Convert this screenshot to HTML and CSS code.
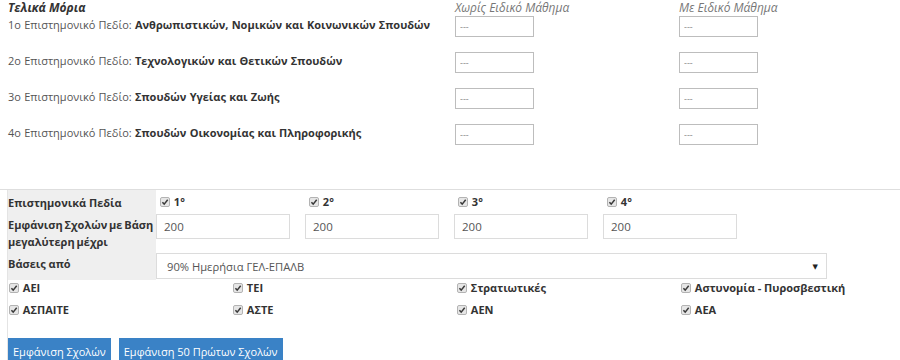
FILE: index.html
```html
<!DOCTYPE html>
<html lang="el">
<head>
<meta charset="utf-8">
<link rel="stylesheet" href="styles.css">
</head>
<body>
<div class="scores">
  <div class="sh-title">Τελικά Μόρια</div>
  <div class="sh-col">Χωρίς Ειδικό Μάθημα</div>
  <div class="sh-col">Με Ειδικό Μάθημα</div>

  <div class="field">1o Επιστημονικό Πεδίο: <b>Ανθρωπιστικών, Νομικών και Κοινωνικών Σπουδών</b></div>
  <div><input class="score" type="text" placeholder="---"></div>
  <div><input class="score" type="text" placeholder="---"></div>

  <div class="field">2o Επιστημονικό Πεδίο: <b>Τεχνολογικών και Θετικών Σπουδών</b></div>
  <div><input class="score" type="text" placeholder="---"></div>
  <div><input class="score" type="text" placeholder="---"></div>

  <div class="field">3o Επιστημονικό Πεδίο: <b>Σπουδών Υγείας και Ζωής</b></div>
  <div><input class="score" type="text" placeholder="---"></div>
  <div><input class="score" type="text" placeholder="---"></div>

  <div class="field">4o Επιστημονικό Πεδίο: <b>Σπουδών Οικονομίας και Πληροφορικής</b></div>
  <div><input class="score" type="text" placeholder="---"></div>
  <div><input class="score" type="text" placeholder="---"></div>
</div>

<div class="filters">
  <div class="flabel">Επιστημονικά Πεδία</div>
  <div class="fcell quad">
    <label class="chk"><svg class="cb" viewBox="0 0 10 10"><rect x=".5" y=".5" width="9" height="9" rx="1.5" fill="#e6e6e6" stroke="#b3b3b3"/><path d="M2.4 5.2 4.2 7.1 7.7 2.8" fill="none" stroke="#3a3a3a" stroke-width="1.5"/></svg> 1°</label>
    <label class="chk"><svg class="cb" viewBox="0 0 10 10"><rect x=".5" y=".5" width="9" height="9" rx="1.5" fill="#e6e6e6" stroke="#b3b3b3"/><path d="M2.4 5.2 4.2 7.1 7.7 2.8" fill="none" stroke="#3a3a3a" stroke-width="1.5"/></svg> 2°</label>
    <label class="chk"><svg class="cb" viewBox="0 0 10 10"><rect x=".5" y=".5" width="9" height="9" rx="1.5" fill="#e6e6e6" stroke="#b3b3b3"/><path d="M2.4 5.2 4.2 7.1 7.7 2.8" fill="none" stroke="#3a3a3a" stroke-width="1.5"/></svg> 3°</label>
    <label class="chk"><svg class="cb" viewBox="0 0 10 10"><rect x=".5" y=".5" width="9" height="9" rx="1.5" fill="#e6e6e6" stroke="#b3b3b3"/><path d="M2.4 5.2 4.2 7.1 7.7 2.8" fill="none" stroke="#3a3a3a" stroke-width="1.5"/></svg> 4°</label>
  </div>

  <div class="flabel nowrap">Εμφάνιση Σχολών με Βάση<br>μεγαλύτερη μέχρι</div>
  <div class="fcell quad inputs">
    <input class="base" type="text" value="200">
    <input class="base" type="text" value="200">
    <input class="base" type="text" value="200">
    <input class="base" type="text" value="200">
  </div>

  <div class="flabel">Βάσεις από</div>
  <div class="fcell sel-cell">
    <div class="select"><span>90% Ημερήσια ΓΕΛ-ΕΠΑΛΒ</span><span class="arrow">▼</span></div>
  </div>
</div>

<div class="types">
  <label class="chk"><svg class="cb" viewBox="0 0 10 10"><rect x=".5" y=".5" width="9" height="9" rx="1.5" fill="#e6e6e6" stroke="#b3b3b3"/><path d="M2.4 5.2 4.2 7.1 7.7 2.8" fill="none" stroke="#3a3a3a" stroke-width="1.5"/></svg> ΑΕΙ</label>
  <label class="chk"><svg class="cb" viewBox="0 0 10 10"><rect x=".5" y=".5" width="9" height="9" rx="1.5" fill="#e6e6e6" stroke="#b3b3b3"/><path d="M2.4 5.2 4.2 7.1 7.7 2.8" fill="none" stroke="#3a3a3a" stroke-width="1.5"/></svg> ΤΕΙ</label>
  <label class="chk"><svg class="cb" viewBox="0 0 10 10"><rect x=".5" y=".5" width="9" height="9" rx="1.5" fill="#e6e6e6" stroke="#b3b3b3"/><path d="M2.4 5.2 4.2 7.1 7.7 2.8" fill="none" stroke="#3a3a3a" stroke-width="1.5"/></svg> Στρατιωτικές</label>
  <label class="chk"><svg class="cb" viewBox="0 0 10 10"><rect x=".5" y=".5" width="9" height="9" rx="1.5" fill="#e6e6e6" stroke="#b3b3b3"/><path d="M2.4 5.2 4.2 7.1 7.7 2.8" fill="none" stroke="#3a3a3a" stroke-width="1.5"/></svg> Αστυνομία - Πυροσβεστική</label>
  <label class="chk"><svg class="cb" viewBox="0 0 10 10"><rect x=".5" y=".5" width="9" height="9" rx="1.5" fill="#e6e6e6" stroke="#b3b3b3"/><path d="M2.4 5.2 4.2 7.1 7.7 2.8" fill="none" stroke="#3a3a3a" stroke-width="1.5"/></svg> ΑΣΠΑΙΤΕ</label>
  <label class="chk"><svg class="cb" viewBox="0 0 10 10"><rect x=".5" y=".5" width="9" height="9" rx="1.5" fill="#e6e6e6" stroke="#b3b3b3"/><path d="M2.4 5.2 4.2 7.1 7.7 2.8" fill="none" stroke="#3a3a3a" stroke-width="1.5"/></svg> ΑΣΤΕ</label>
  <label class="chk"><svg class="cb" viewBox="0 0 10 10"><rect x=".5" y=".5" width="9" height="9" rx="1.5" fill="#e6e6e6" stroke="#b3b3b3"/><path d="M2.4 5.2 4.2 7.1 7.7 2.8" fill="none" stroke="#3a3a3a" stroke-width="1.5"/></svg> ΑΕΝ</label>
  <label class="chk"><svg class="cb" viewBox="0 0 10 10"><rect x=".5" y=".5" width="9" height="9" rx="1.5" fill="#e6e6e6" stroke="#b3b3b3"/><path d="M2.4 5.2 4.2 7.1 7.7 2.8" fill="none" stroke="#3a3a3a" stroke-width="1.5"/></svg> ΑΕΑ</label>
</div>

<div class="actions">
  <button class="btn" type="button">Εμφάνιση Σχολών</button>
  <button class="btn" type="button">Εμφάνιση 50 Πρώτων Σχολών</button>
</div>
</body>
</html>
```
FILE: styles.css
```css
html, body {
  margin: 0;
  padding: 0;
  background: #fff;
}
body {
  padding-left: 8px;
  font-family: "Open Sans", "DejaVu Sans", sans-serif;
  font-size: 11px;
  color: #333;
  overflow: hidden;
  height: 360px;
}

/* top scores table */
.scores {
  display: grid;
  grid-template-columns: 447px 224px 224px;
  grid-template-rows: 16px repeat(4, 36px);
}
.sh-title {
  font-weight: 700;
  font-style: italic;
  font-size: 12px;
  line-height: 16px;
  color: #333;
}
.sh-col {
  font-style: italic;
  font-size: 12px;
  line-height: 16px;
  color: #777;
}
.field {
  font-size: 11px;
  word-spacing: 0.4px;
  line-height: 17px;
  color: #555;
}
.field b {
  color: #333;
  font-weight: 700;
}
.score {
  box-sizing: border-box;
  display: block;
  width: 79px;
  height: 21px;
  margin: 0;
  padding: 0 4px;
  border: 1px solid #bdbdbd;
  font-family: "Open Sans", sans-serif;
  font-size: 9px;
  outline: none;
}
.score::placeholder {
  color: #888;
}

/* filters table */
.filters {
  margin-top: 29px;
  margin-left: -8px;
  padding-left: 8px;
  border-top: 1px solid #dedede;
  display: grid;
  grid-template-columns: 148px 1fr;
}
.flabel {
  background: #efefef;
  font-weight: 700;
  font-size: 11px;
  line-height: 17px;
  padding: 4px 0 1px 0;
  box-shadow: -1px 0 0 #e4e4e4;
}
.nowrap {
  white-space: nowrap;
  word-spacing: -1px;
}
.quad {
  display: grid;
  grid-template-columns: repeat(4, 149px);
}
.quad .chk {
  padding-left: 4px;
  line-height: 17px;
  padding-top: 3px;
}
.inputs {
  align-items: start;
  padding-top: 2px;
}
.base {
  box-sizing: border-box;
  width: 134px;
  height: 25px;
  margin: 0;
  padding: 0 7px;
  border: 1px solid #dcdcdc;
  font-family: "Open Sans", sans-serif;
  font-size: 11.5px;
  color: #555;
  outline: none;
}
.sel-cell {
  padding-top: 2px;
  padding-bottom: 1px;
}
.select {
  box-sizing: border-box;
  width: 671px;
  height: 26px;
  border: 1px solid #dcdcdc;
  display: flex;
  align-items: center;
  justify-content: space-between;
  padding: 0 8px 0 10px;
  font-size: 11.2px;
  color: #555;
}
.arrow {
  font-size: 7px;
  color: #222;
}

/* type checkboxes */
.types {
  display: grid;
  grid-template-columns: repeat(4, 224px);
  grid-auto-rows: 22px;
  border-left: 1px solid #e4e4e4;
  margin-left: -1px;
  margin-top: -1px;
}
.chk {
  font-weight: 700;
  font-size: 11px;
  line-height: 17px;
  color: #333;
  white-space: nowrap;
}
.types .chk {
  padding-left: 1px;
}
.cb {
  width: 10px;
  height: 10px;
  vertical-align: -1px;
  margin-right: 1px;
}

/* buttons */
.actions {
  display: flex;
  gap: 8px;
  padding-top: 15px;
  border-left: 1px solid #e4e4e4;
  margin-left: -1px;
}
.btn {
  background: #3a82c6;
  color: #fff;
  border: none;
  font-family: "Open Sans", sans-serif;
  font-size: 11px;
  height: 26px;
  padding: 0 5px;
  margin: 0;
}
```
